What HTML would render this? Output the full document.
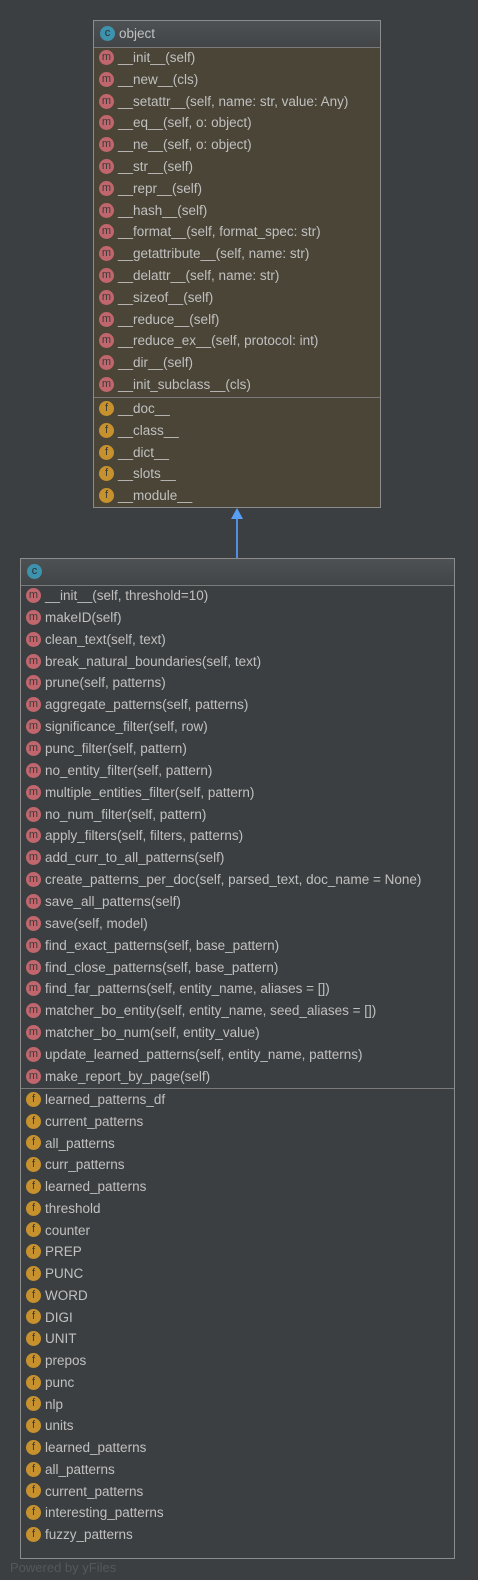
<!DOCTYPE html>
<html><head><style>
body{margin:0;width:478px;height:1580px;background:#3c3f41;position:relative;overflow:hidden;font-family:"Liberation Sans",sans-serif;font-size:13.5px;color:#c0c0c0}
.box{position:absolute;border:1px solid #8c8c8c;box-sizing:border-box}
.hd{position:absolute;left:0;right:0;top:0;height:26px;background:linear-gradient(#4e5153,#424547);border-bottom:1px solid #7a7a7a}
.row{position:absolute;height:20px;line-height:20px;white-space:nowrap;z-index:2}
.ic{display:inline-block;width:15px;height:15px;border-radius:50%;text-align:center;line-height:14px;font-size:11px;vertical-align:middle;margin-right:4px;position:relative;top:-1px;color:#3a3a3a}
.m{background:#c0666c}.f{background:#c7922e}.c{background:#3d93ad;color:#2b2b2b}
.sep{position:absolute;left:0;right:0;height:1px;background:#7a7a7a}
</style></head><body>
<div class="box" style="left:93px;top:20px;width:288px;height:488px;background:#4a4537">
<div class="hd"></div>
<div class="row" style="left:6px;top:3px"><span class="ic c">c</span>object</div>
<div class="sep" style="top:376px"></div>
</div>
<div style="position:absolute;left:236px;top:518px;width:2px;height:40px;background:#4f8ee0"></div>
<div style="position:absolute;left:231px;top:508px;width:0;height:0;border-left:6px solid transparent;border-right:6px solid transparent;border-bottom:11px solid #589df6"></div>
<div class="box" style="left:20px;top:558px;width:435px;height:1001px;background:#3c3f41">
<div class="hd"></div>
<div class="row" style="left:6px;top:3px"><span class="ic c">c</span></div>
<div class="sep" style="top:529px"></div>
</div>
<div style="position:absolute;left:10px;top:1560px;color:#555759;font-size:13px">Powered by yFiles</div>
<div id="t"></div>
<script>
function add(x,y0,step,items,cls){var h='';items.forEach(function(s,i){h+='<div class="row" style="left:'+x+'px;top:'+(y0+i*step-10)+'px"><span class="ic '+cls+'">'+cls+'</span>'+s.replace(/</g,'&lt;')+'</div>'});document.getElementById('t').insertAdjacentHTML('beforeend',h)}
add(99,58,21.8,["__init__(self)","__new__(cls)","__setattr__(self, name: str, value: Any)","__eq__(self, o: object)","__ne__(self, o: object)","__str__(self)","__repr__(self)","__hash__(self)","__format__(self, format_spec: str)","__getattribute__(self, name: str)","__delattr__(self, name: str)","__sizeof__(self)","__reduce__(self)","__reduce_ex__(self, protocol: int)","__dir__(self)","__init_subclass__(cls)"],'m');
add(99,409,21.8,["__doc__","__class__","__dict__","__slots__","__module__"],'f');
add(26,596,21.86,["__init__(self, threshold=10)","makeID(self)","clean_text(self, text)","break_natural_boundaries(self, text)","prune(self, patterns)","aggregate_patterns(self, patterns)","significance_filter(self, row)","punc_filter(self, pattern)","no_entity_filter(self, pattern)","multiple_entities_filter(self, pattern)","no_num_filter(self, pattern)","apply_filters(self, filters, patterns)","add_curr_to_all_patterns(self)","create_patterns_per_doc(self, parsed_text, doc_name = None)","save_all_patterns(self)","save(self, model)","find_exact_patterns(self, base_pattern)","find_close_patterns(self, base_pattern)","find_far_patterns(self, entity_name, aliases = [])","matcher_bo_entity(self, entity_name, seed_aliases = [])","matcher_bo_num(self, entity_value)","update_learned_patterns(self, entity_name, patterns)","make_report_by_page(self)"],'m');
add(26,1100,21.75,["learned_patterns_df","current_patterns","all_patterns","curr_patterns","learned_patterns","threshold","counter","PREP","PUNC","WORD","DIGI","UNIT","prepos","punc","nlp","units","learned_patterns","all_patterns","current_patterns","interesting_patterns","fuzzy_patterns"],'f');
</script>
</body></html>
